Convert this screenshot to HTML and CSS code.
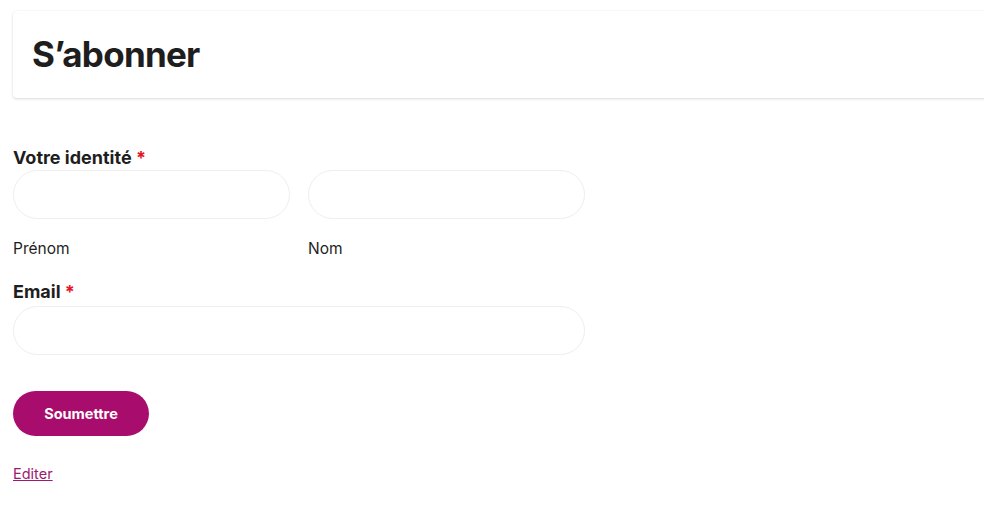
FILE: index.html
```html
<!DOCTYPE html>
<html lang="fr">
<head>
<meta charset="utf-8">
<title>S’abonner</title>
<link rel="stylesheet" href="styles.css">
</head>
<body>
<div class="page">
  <header class="title-card">
    <h1 class="title">S’abonner</h1>
  </header>
  <form class="form">
    <div class="field">
      <div class="label">Votre identité <span class="req">*</span></div>
      <div class="name-row">
        <div class="sub">
          <input class="input" type="text">
          <span class="sublabel">Prénom</span>
        </div>
        <div class="sub">
          <input class="input" type="text">
          <span class="sublabel">Nom</span>
        </div>
      </div>
    </div>
    <div class="field email-field">
      <div class="label">Email <span class="req">*</span></div>
      <input class="input wide" type="email">
    </div>
    <button class="submit" type="button">Soumettre</button>
    <a class="edit" href="#">Editer</a>
  </form>
</div>
</body>
</html>
```
FILE: styles.css
```css
html, body {
  margin: 0;
  padding: 0;
  background: #ffffff;
  overflow-x: hidden;
}
body {
  font-family: Inter, "Noto Sans", sans-serif;
  color: #1e1e1e;
}
.page {
  padding: 11px 0 0 13px;
}
.title-card {
  width: calc(100% + 40px);
  height: 87px;
  box-sizing: border-box;
  background: #fff;
  border-radius: 4px;
  box-shadow: 0 1px 3px rgba(0,0,0,0.14), 0 0 1px rgba(0,0,0,0.08);
  display: flex;
  align-items: center;
  padding-left: 19px;
}
.title {
  margin: 0;
  font-size: 35px;
  font-weight: 700;
  letter-spacing: -0.75px;
  color: #1e1e1e;
  line-height: 1;
}
.form {
  width: 572px;
  padding-top: 49px;
  display: flex;
  flex-direction: column;
}
.field {
  display: flex;
  flex-direction: column;
}
.label {
  font-size: 18px;
  font-weight: 700;
  line-height: 22px;
  margin-bottom: 1px;
}
.req {
  color: #e8121e;
}
.name-row {
  display: flex;
  gap: 18px;
}
.sub {
  flex: 1;
  display: flex;
  flex-direction: column;
}
.input {
  box-sizing: border-box;
  height: 49px;
  width: 100%;
  border: 1px solid #eeeeee;
  border-radius: 25px;
  background: #fff;
  padding: 0 20px;
  font: inherit;
  outline: none;
}
.sublabel {
  font-size: 15.5px;
  line-height: 20px;
  margin-top: 20px;
  margin-bottom: 22px;
  color: #1e1e1e;
}
.email-field .label {
  margin-bottom: 3px;
}
.wide {
  width: 572px;
}
.submit {
  align-self: flex-start;
  margin-top: 36px;
  width: 136px;
  height: 45px;
  border: none;
  border-radius: 23px;
  background: #a80d6e;
  color: #fff;
  font-family: Inter, "Noto Sans", sans-serif;
  font-size: 14.5px;
  font-weight: 700;
  cursor: pointer;
}
.edit {
  align-self: flex-start;
  margin-top: 28px;
  font-size: 14.5px;
  line-height: 20px;
  color: #9b1a72;
  text-decoration: underline;
}
```
